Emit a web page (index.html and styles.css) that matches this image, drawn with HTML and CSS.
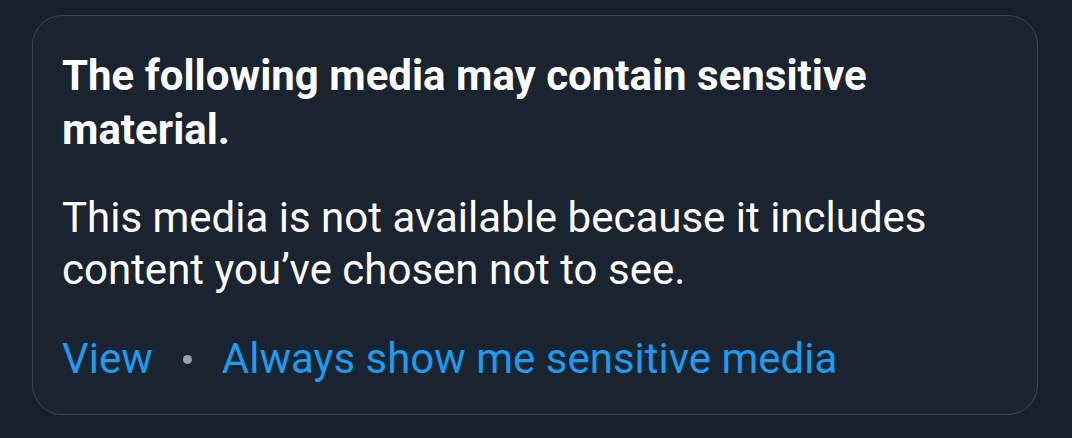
FILE: index.html
```html
<html>
<head>
<link rel="stylesheet" href="styles.css">
</head>
<body>
<div class="notice">
<h1 class="notice-title">The following media may contain sensitive material.</h1>
<p class="notice-text">This media is not available because it includes content you&rsquo;ve chosen not to see.</p>
<div class="notice-links">
<a class="link" href="#">View</a>
<span class="dot"></span>
<a class="link" href="#">Always show me sensitive media</a>
</div>
</div>
</body>
</html>
```

FILE: styles.css
```css
body {
background-color: #17202a;
margin: 0;
padding: 15px 34px 0 32px;
font-family: Roboto, "Liberation Sans", sans-serif;
}

.notice {
background-color: #1a2430;
border: 1px solid #3a4550;
border-radius: 30px;
height: 398px;
padding: 0 29px;
}

.notice-title {
color: #ffffff;
font-size: 42px;
font-weight: bold;
line-height: 54px;
max-width: 880px;
margin: 33px 0 0 0;
}

.notice-text {
color: #ffffff;
font-size: 42px;
line-height: 52px;
margin: 35px 0 0 0;
}

.notice-links {
display: flex;
align-items: center;
gap: 30px;
margin-top: 37px;
font-size: 42px;
line-height: 52px;
}

.link {
color: #1d9bf0;
text-decoration: none;
}

.dot {
width: 9px;
height: 9px;
border-radius: 50%;
background-color: #9aa3ac;
}
```
